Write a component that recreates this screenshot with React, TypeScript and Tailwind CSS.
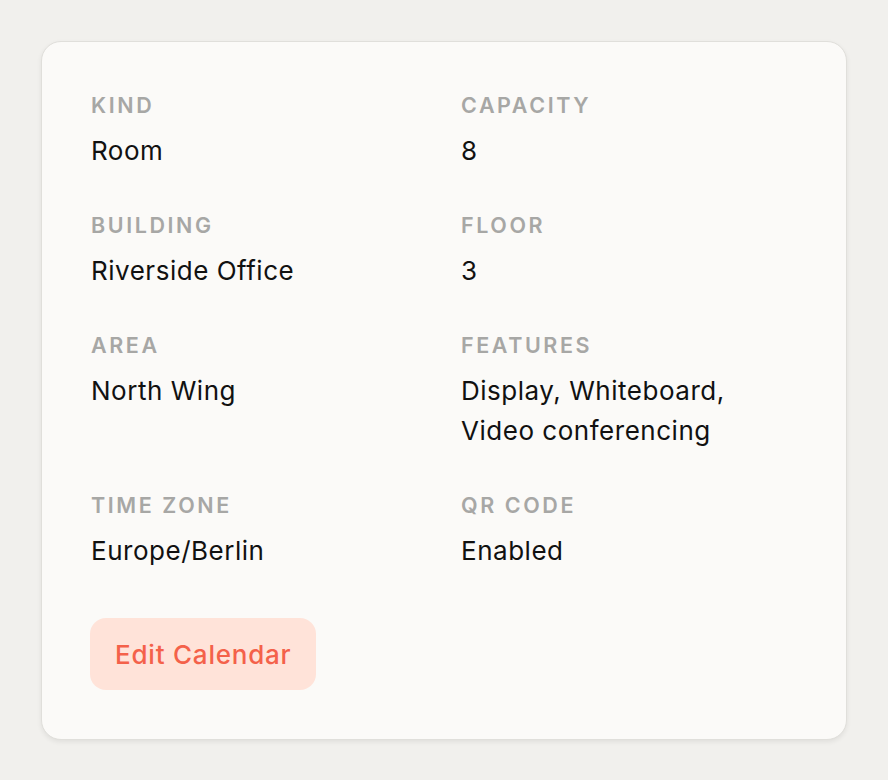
const fields = [
  { label: 'Kind', value: ['Room'] },
  { label: 'Capacity', value: ['8'] },
  { label: 'Building', value: ['Riverside Office'] },
  { label: 'Floor', value: ['3'] },
  { label: 'Area', value: ['North Wing'] },
  { label: 'Features', value: ['Display, Whiteboard,', 'Video conferencing'] },
  { label: 'Time Zone', value: ['Europe/Berlin'] },
  { label: 'QR Code', value: ['Enabled'] },
];

export default function App() {
  return (
    <div
      className="min-h-[780px] bg-[#f1f0ed] p-[41px] pb-[40px]"
      style={{ fontFamily: 'Inter, "Noto Sans", sans-serif' }}
    >
      <div className="rounded-[20px] border border-[#e0dfdb] bg-[#fbfaf8] p-[49px] shadow-[0_2px_5px_rgba(0,0,0,0.07)]">
        {/* Details */}
        <div className="grid grid-cols-2 gap-x-[34px] gap-y-[40px]">
          {fields.map((f) => (
            <div key={f.label}>
              <div className="text-[21.5px] font-semibold uppercase leading-[28px] tracking-[0.12em] text-[#a7a7a5]">
                {f.label}
              </div>
              <div className="mt-[12px] text-[26px] leading-[40px] tracking-[0.02em] text-[#111111]">
                {f.value.map((line) => (
                  <div key={line}>{line}</div>
                ))}
              </div>
            </div>
          ))}
        </div>

        <button className="-ml-px mt-[47px] h-[72px] rounded-[16px] bg-[#ffe3d9] px-[25px] text-[26px] font-medium tracking-[0.03em] text-[#f4614a]">
          Edit Calendar
        </button>
      </div>
    </div>
  );
}
